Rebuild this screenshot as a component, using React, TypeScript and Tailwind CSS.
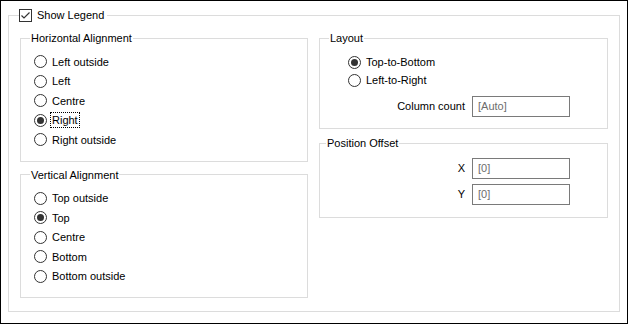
import React from 'react';

const Radio = ({ checked }: { checked?: boolean }) => (
  <svg width="13" height="13" viewBox="0 0 13 13" className="shrink-0">
    <circle cx="6.5" cy="6.5" r="6" fill="white" stroke="#333" strokeWidth="1" />
    {checked && <circle cx="6.5" cy="6.5" r="3.5" fill="#333" />}
  </svg>
);

const Checkbox = () => (
  <svg width="13" height="13" viewBox="0 0 13 13" className="shrink-0">
    <rect x="0.5" y="0.5" width="12" height="12" fill="white" stroke="#333" />
    <polyline points="2.5,6.5 5,9 10.5,3.5" fill="none" stroke="#333" strokeWidth="1.2" />
  </svg>
);

function RadioRow({ label, checked, focused }: { label: string; checked?: boolean; focused?: boolean }) {
  return (
    <div className="flex items-center gap-[4px] h-[19.5px]">
      <Radio checked={checked} />
      <span className={focused ? 'outline outline-1 outline-dotted outline-black px-[1px] leading-[14px]' : 'px-[1px]'}>
        {label}
      </span>
    </div>
  );
}

function Field({ value }: { value: string }) {
  return (
    <div className="w-[98px] h-[21px] border border-[#7a7a7a] flex items-center px-[5px] text-[#6d6d6d]">
      {value}
    </div>
  );
}

export default function App() {
  return (
    <div className="w-[628px] h-[324px] border border-black bg-white px-[7px] pt-[7px] pb-[11px] font-['Liberation_Sans',sans-serif] text-[11px] text-black">
      <fieldset className="h-full border border-[#dcdcdc] px-[11px]">
        <legend className="ml-[-1px] pr-[3px] h-[14px]">
          <span className="inline-flex items-center gap-[5px] leading-[14px]">
            <Checkbox />
            Show Legend
          </span>
        </legend>

        <div className="flex gap-[11px] mt-[9px]">
          <div className="w-[288px] flex flex-col gap-[6px]">
            <fieldset className="border border-[#dcdcdc]">
              <legend className="ml-[9px] px-[1px] leading-[14px]">Horizontal Alignment</legend>
              <div className="pl-[13px] pt-[7px] pb-[11px]">
                <RadioRow label="Left outside" />
                <RadioRow label="Left" />
                <RadioRow label="Centre" />
                <RadioRow label="Right" checked focused />
                <RadioRow label="Right outside" />
              </div>
            </fieldset>

            <fieldset className="border border-[#dcdcdc]">
              <legend className="ml-[9px] px-[1px] leading-[14px]">Vertical Alignment</legend>
              <div className="pl-[13px] pt-[7px] pb-[11px]">
                <RadioRow label="Top outside" />
                <RadioRow label="Top" checked />
                <RadioRow label="Centre" />
                <RadioRow label="Bottom" />
                <RadioRow label="Bottom outside" />
              </div>
            </fieldset>
          </div>

          <div className="flex-1 flex flex-col gap-[7px]">
            <fieldset className="border border-[#dcdcdc]">
              <legend className="ml-[9px] px-[1px] leading-[14px]">Layout</legend>
              <div className="pl-[28px] pr-[37px] pt-[8px] pb-[11px]">
                <div className="flex items-center gap-[4px] h-[18px]">
                  <Radio checked />
                  <span className="px-[1px]">Top-to-Bottom</span>
                </div>
                <div className="flex items-center gap-[4px] h-[18px]">
                  <Radio />
                  <span className="px-[1px]">Left-to-Right</span>
                </div>
                <div className="flex items-center justify-end gap-[7px] mt-[7px]">
                  <span>Column count</span>
                  <Field value="[Auto]" />
                </div>
              </div>
            </fieldset>

            <fieldset className="border border-[#dcdcdc]">
              <legend className="ml-[6px] px-[1px] leading-[14px]">Position Offset</legend>
              <div className="flex flex-col items-end gap-[5px] pr-[37px] pt-[8px] pb-[12px]">
                <div className="flex items-center gap-[7px]">
                  <span>X</span>
                  <Field value="[0]" />
                </div>
                <div className="flex items-center gap-[7px]">
                  <span>Y</span>
                  <Field value="[0]" />
                </div>
              </div>
            </fieldset>
          </div>
        </div>
      </fieldset>
    </div>
  );
}
